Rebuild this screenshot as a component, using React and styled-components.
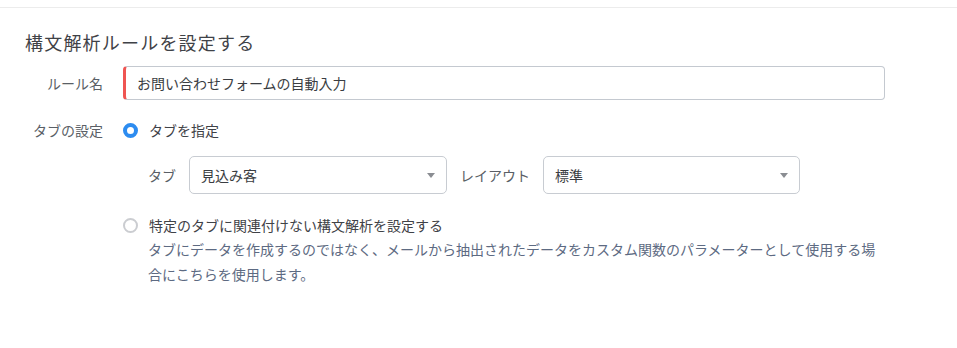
import styled, { createGlobalStyle } from "styled-components";

const GlobalStyle = createGlobalStyle`
  body {
    margin: 0;
    background: #fff;
    font-family: "Noto Sans CJK JP", "Noto Sans", sans-serif;
    color: #333;
  }
`;

const TopBar = styled.div`
  height: 7px;
  border-bottom: 1px solid #ececec;
`;

const Wrap = styled.section`
  padding: 21px 0 0 25px;
  width: 860px;
`;

const Title = styled.h2`
  margin: 0;
  font-size: 18px;
  font-weight: 400;
  line-height: 26px;
  letter-spacing: 1.2px;
  color: #3f4247;
`;

const Row = styled.div`
  display: flex;
  align-items: ${(p) => (p.$top ? "flex-start" : "center")};
  gap: 20px;
  margin-top: ${(p) => p.$mt || 0}px;
`;

const Label = styled.div`
  width: 78px;
  flex: none;
  text-align: right;
  font-size: 14px;
  line-height: 20px;
  color: #5a5f66;
`;

const TextInput = styled.div`
  flex: 1;
  height: 34px;
  box-sizing: border-box;
  border: 1px solid #c4c9d0;
  border-left: 3px solid #ef5552;
  border-radius: 4px;
  padding-left: 11px;
  display: flex;
  align-items: center;
  font-size: 14px;
  color: #3a3d42;
`;

const Options = styled.div`
  flex: 1;
  display: flex;
  flex-direction: column;
`;

const RadioLine = styled.label`
  display: flex;
  align-items: center;
  gap: 11px;
  margin-top: ${(p) => p.$mt || 0}px;
  font-size: 14px;
  line-height: 20px;
  color: #3f4247;
`;

const Radio = styled.span`
  width: 15px;
  height: 15px;
  box-sizing: border-box;
  border-radius: 50%;
  flex: none;
  border: ${(p) => (p.$on ? "4px solid #2d8cf0" : "2px solid #cbcdd1")};
  background: #fff;
`;

const SubRow = styled.div`
  display: flex;
  align-items: center;
  margin: 16px 0 0 25px;
  gap: 13px;
  font-size: 14px;
  color: #5a5f66;
`;

const Select = styled.div`
  width: ${(p) => p.$w}px;
  height: 38px;
  box-sizing: border-box;
  border: 1px solid #c8ccd2;
  border-radius: 5px;
  display: flex;
  align-items: center;
  justify-content: space-between;
  padding: 0 11px;
  font-size: 14px;
  color: #3a3d42;
  &::after {
    content: "";
    border-left: 4px solid transparent;
    border-right: 4px solid transparent;
    border-top: 5px solid #8a8d92;
  }
`;

const Desc = styled.p`
  margin: 2px 0 0 25px;
  font-size: 14px;
  line-height: 25px;
  color: #5d6a82;
`;

export default function App() {
  return (
    <>
      <GlobalStyle />
      <TopBar />
      <Wrap>
        <Title>構文解析ルールを設定する</Title>
        <Row $mt={11}>
          <Label>ルール名</Label>
          <TextInput>お問い合わせフォームの自動入力</TextInput>
        </Row>
        <Row $mt={20} $top>
          <Label>タブの設定</Label>
          <Options>
            <RadioLine>
              <Radio $on />
              タブを指定
            </RadioLine>
            <SubRow>
              タブ
              <Select $w={258}>見込み客</Select>
              レイアウト
              <Select $w={257}>標準</Select>
            </SubRow>
            <RadioLine $mt={21}>
              <Radio />
              特定のタブに関連付けない構文解析を設定する
            </RadioLine>
            <Desc>
              タブにデータを作成するのではなく、メールから抽出されたデータをカスタム関数のパラメーターとして使用する場合にこちらを使用します。
            </Desc>
          </Options>
        </Row>
      </Wrap>
    </>
  );
}
